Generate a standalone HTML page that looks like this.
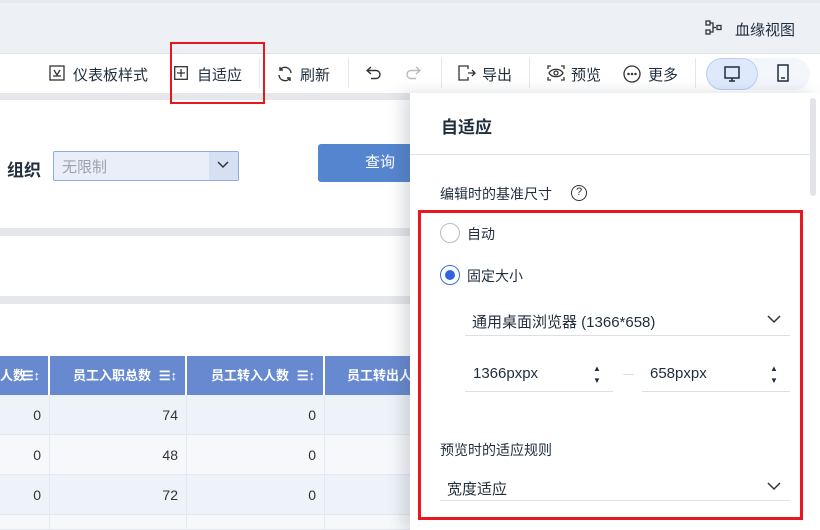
<!DOCTYPE html>
<html style="width:820px;height:530px;overflow:hidden"><head><meta charset="utf-8"><style>
*{margin:0;padding:0;box-sizing:border-box}
body{width:820px;height:530px;overflow:hidden;position:relative;background:#fff;font-family:"Liberation Sans","Noto Sans CJK SC",sans-serif;color:#1f2d3d}
.a{position:absolute}
.t{font-size:14px;color:#1f2d3d;white-space:nowrap}
.tb{font-size:15px;top:64px}
.sep{position:absolute;top:58px;width:1px;height:30px;background:#e4e6ea}
.th{position:absolute;top:356px;height:39px;background:#6789d0;color:#fff;font-size:13px;font-weight:bold;line-height:39px;text-align:right;padding-right:34px;white-space:nowrap;overflow:hidden}
.td{position:absolute;height:40px;line-height:40px;text-align:right;padding-right:8px;font-size:14px;color:#333;border-right:1px solid #e3e8f2;border-bottom:1px solid #e3e8f2}
.sort{position:absolute;right:8px;top:0;font-size:13px}
</style></head><body>
<div class="a" style="left:0;top:0;width:820px;height:54px;background:#edf0f5;border-top:3px solid #e6e8eb;border-bottom:1px solid #dfe2e8"></div>
<svg class="a" style="left:705px;top:20px" width="18" height="16" viewBox="0 0 18 16" fill="none" stroke="#333" stroke-width="1.3"><rect x="1" y="1" width="4" height="4"/><rect x="1" y="10" width="4" height="4"/><path d="M5 3h3v9H5M8 7.5h3"/><rect x="12" y="5.5" width="4" height="4"/></svg>
<div class="a t" style="left:735px;top:19px;font-size:15px">血缘视图</div>
<div class="a" style="left:0;top:54px;width:820px;height:39px;background:#fff"></div>
<svg class="a" style="left:49px;top:65px" width="16" height="16" viewBox="0 0 16 16" fill="none" stroke="#333" stroke-width="1.3"><rect x="1" y="1" width="14" height="14"/><path d="M5 5l3 5 3-5M4 11h8"/></svg>
<div class="a t tb" style="left:73px">仪表板样式</div>
<svg class="a" style="left:174px;top:66px" width="14" height="14" viewBox="0 0 14 14" fill="none" stroke="#333" stroke-width="1.3"><rect x="0.7" y="0.7" width="12.6" height="12.6"/><path d="M7 3v8M3 7h8"/></svg>
<div class="a t tb" style="left:197px">自适应</div>
<div class="sep" style="left:259px"></div>
<svg class="a" style="left:276px;top:65px" width="18" height="18" viewBox="0 0 18 18" fill="none" stroke="#333" stroke-width="1.4"><path d="M15 8a6 6 0 0 0-11-3M3 10a6 6 0 0 0 11 3"/><path d="M4 2v3h3M14 16v-3h-3"/></svg>
<div class="a t tb" style="left:300px">刷新</div>
<div class="sep" style="left:348px"></div>
<svg class="a" style="left:366px;top:66px" width="16" height="14" viewBox="0 0 16 14" fill="none" stroke="#333" stroke-width="1.4"><path d="M5 1L1 4.5 5 8M1 4.5h9a4 4 0 0 1 0 8H5"/></svg>
<svg class="a" style="left:405px;top:66px" width="16" height="14" viewBox="0 0 16 14" fill="none" stroke="#bbb" stroke-width="1.4"><path d="M11 1l4 3.5L11 8M15 4.5H6a4 4 0 0 0 0 8h5"/></svg>
<div class="sep" style="left:441px"></div>
<svg class="a" style="left:458px;top:65px" width="18" height="16" viewBox="0 0 18 16" fill="none" stroke="#333" stroke-width="1.3"><path d="M7 1H1v14h6M7 1h3v3M10 12v3H7M10 8h7M14 5l3 3-3 3"/></svg>
<div class="a t tb" style="left:482px">导出</div>
<div class="sep" style="left:529px"></div>
<svg class="a" style="left:547px;top:65px" width="18" height="16" viewBox="0 0 18 16" fill="none" stroke="#333" stroke-width="1.3"><path d="M1 4V1h3M14 1h3v3M17 12v3h-3M4 15H1v-3M2 8c3-5 11-5 14 0-3 5-11 5-14 0z"/><circle cx="9" cy="8" r="2"/></svg>
<div class="a t tb" style="left:571px">预览</div>
<svg class="a" style="left:623px;top:65px" width="18" height="18" viewBox="0 0 18 18" fill="none" stroke="#333" stroke-width="1.3"><circle cx="9" cy="9" r="8"/><circle cx="5.5" cy="9" r=".6" fill="#333"/><circle cx="9" cy="9" r=".6" fill="#333"/><circle cx="12.5" cy="9" r=".6" fill="#333"/></svg>
<div class="a t tb" style="left:648px">更多</div>
<div class="sep" style="left:695px"></div>
<div class="a" style="left:706px;top:58px;width:104px;height:32px;border-radius:16px;background:#f3f6fb"></div>
<div class="a" style="left:706px;top:58px;width:52px;height:32px;border-radius:16px;background:#deeafc;border:1px solid #b8cff5"></div>
<svg class="a" style="left:723px;top:65px" width="18" height="18" viewBox="0 0 18 18" fill="none" stroke="#1f2d3d" stroke-width="1.5"><rect x="2" y="2" width="14" height="11"/><path d="M9 13v3M6 16h6"/></svg>
<svg class="a" style="left:776px;top:64px" width="14" height="18" viewBox="0 0 14 18" fill="none" stroke="#1f2d3d" stroke-width="1.5"><rect x="2" y="1" width="10" height="16"/><path d="M5 14h4"/></svg>
<div class="a" style="left:0;top:93px;width:420px;height:7px;background:#e6e7eb"></div>
<div class="a" style="left:7px;top:156px;font-size:17px;font-weight:bold">组织</div>
<div class="a" style="left:53px;top:151px;width:186px;height:30px;background:#e9eef8;border:1px solid #8fabe0;border-radius:2px"></div>
<div class="a" style="left:209px;top:152px;width:29px;height:28px;background:#d5e0f3"></div>
<svg class="a" style="left:216px;top:160px" width="14" height="10" viewBox="0 0 14 10" fill="none" stroke="#333" stroke-width="1.5"><path d="M2 2l5 5 5-5"/></svg>
<div class="a" style="left:62px;top:156px;font-size:15px;color:#9aa3b0">无限制</div>
<div class="a" style="left:318px;top:144px;width:100px;height:38px;background:#5585cf;border-radius:3px;color:#fff;font-size:15px;line-height:38px;padding-left:47px">查询</div>
<div class="a" style="left:0;top:228px;width:420px;height:8px;background:#e6e7eb"></div>
<div class="a" style="left:0;top:296px;width:420px;height:8px;background:#e6e7eb"></div>
<div class="th" style="left:0;width:48px;padding-right:30px">人数<span class="sort">☰↕</span></div>
<div class="th" style="left:50px;width:135px">员工入职总数<span class="sort">☰↕</span></div>
<div class="th" style="left:187px;width:136px">员工转入人数<span class="sort">☰↕</span></div>
<div class="th" style="left:325px;width:95px;text-align:left;padding-left:22px">员工转出人数</div>
<div class="td" style="left:0;top:395px;width:50px;background:#eef2f9">0</div>
<div class="td" style="left:50px;top:395px;width:137px;background:#eef2f9">74</div>
<div class="td" style="left:187px;top:395px;width:138px;background:#eef2f9">0</div>
<div class="td" style="left:325px;top:395px;width:95px;background:#eef2f9"></div>
<div class="td" style="left:0;top:435px;width:50px;background:#f7f8fc">0</div>
<div class="td" style="left:50px;top:435px;width:137px;background:#f7f8fc">48</div>
<div class="td" style="left:187px;top:435px;width:138px;background:#f7f8fc">0</div>
<div class="td" style="left:325px;top:435px;width:95px;background:#f7f8fc"></div>
<div class="td" style="left:0;top:475px;width:50px;background:#eef2f9">0</div>
<div class="td" style="left:50px;top:475px;width:137px;background:#eef2f9">72</div>
<div class="td" style="left:187px;top:475px;width:138px;background:#eef2f9">0</div>
<div class="td" style="left:325px;top:475px;width:95px;background:#eef2f9"></div>
<div class="td" style="left:0;top:515px;width:50px;height:15px;background:#f7f8fc"></div>
<div class="td" style="left:50px;top:515px;width:137px;height:15px;background:#f7f8fc"></div>
<div class="td" style="left:187px;top:515px;width:138px;height:15px;background:#f7f8fc"></div>
<div class="td" style="left:325px;top:515px;width:95px;height:15px;background:#f7f8fc"></div>
<div class="a" style="left:410px;top:93px;width:410px;height:437px;background:#fff;box-shadow:-8px 0 14px rgba(60,70,90,.18)"></div>
<div class="a" style="left:810px;top:98px;width:6px;height:98px;border-radius:3px;background:#e2e4e8"></div>
<div class="a" style="left:441px;top:113px;font-size:17px;font-weight:bold;color:#1f2d3d">自适应</div>
<div class="a" style="left:410px;top:154px;width:400px;height:1px;background:#dfe2e8"></div>
<div class="a t" style="left:440px;top:184px">编辑时的基准尺寸</div>
<div class="a" style="left:571px;top:185px;width:16px;height:16px;border:1.3px solid #333;border-radius:50%;font-size:11px;line-height:13px;text-align:center">?</div>
<div class="a" style="left:440px;top:223px;width:20px;height:20px;border:1px solid #b7bcc6;border-radius:50%"></div>
<div class="a t" style="left:467px;top:224px">自动</div>
<div class="a" style="left:440px;top:265px;width:20px;height:20px;border:1px solid #3d6fd8;border-radius:50%"></div>
<div class="a" style="left:445px;top:270px;width:10px;height:10px;background:#2f64dc;border-radius:50%"></div>
<div class="a t" style="left:467px;top:266px">固定大小</div>
<div class="a t" style="left:472px;top:311px;font-size:15px">通用桌面浏览器 (1366*658)</div>
<svg class="a" style="left:767px;top:314px" width="14" height="10" viewBox="0 0 14 10" fill="none" stroke="#333" stroke-width="1.5"><path d="M1 2l6 6 6-6"/></svg>
<div class="a" style="left:465px;top:335px;width:325px;height:1px;background:#dcdfe5"></div>
<div class="a t" style="left:473px;top:365px;font-size:15px">1366pxpx</div>
<div class="a" style="left:593px;top:363px;font-size:8px;line-height:12px">▲<br>▼</div>
<div class="a" style="left:465px;top:391px;width:148px;height:1px;background:#dcdfe5"></div>
<div class="a" style="left:623px;top:374px;width:11px;height:1px;background:#dcdfe5"></div>
<div class="a t" style="left:650px;top:365px;font-size:15px">658pxpx</div>
<div class="a" style="left:770px;top:363px;font-size:8px;line-height:12px">▲<br>▼</div>
<div class="a" style="left:642px;top:391px;width:148px;height:1px;background:#dcdfe5"></div>
<div class="a t" style="left:440px;top:440px">预览时的适应规则</div>
<div class="a t" style="left:447px;top:478px;font-size:15px">宽度适应</div>
<svg class="a" style="left:767px;top:481px" width="14" height="10" viewBox="0 0 14 10" fill="none" stroke="#333" stroke-width="1.5"><path d="M1 2l6 6 6-6"/></svg>
<div class="a" style="left:440px;top:500px;width:350px;height:1px;background:#dcdfe5"></div>
<div class="a" style="left:170px;top:42px;width:95px;height:62px;border:2px solid #e8161f"></div>
<div class="a" style="left:418px;top:210px;width:385px;height:310px;border:3px solid #e8161f"></div>
</body></html>
